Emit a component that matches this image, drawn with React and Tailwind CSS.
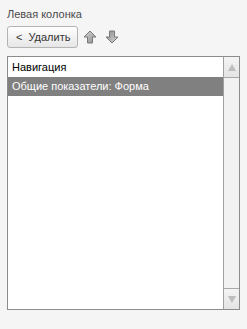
import React from "react";

const ArrowIcon = ({ down }) => (
  <svg width="14" height="14" viewBox="0 0 14 14" className={down ? "rotate-180" : ""}>
    <defs>
      <linearGradient id={down ? "gd" : "gu"} x1="0" y1="0" x2="1" y2="1">
        <stop offset="0" stopColor="#d8d8d8" />
        <stop offset="1" stopColor="#8a8a8a" />
      </linearGradient>
    </defs>
    <path
      d="M7 1 L13 7 L9.5 7 L9.5 13 L4.5 13 L4.5 7 L1 7 Z"
      fill={`url(#${down ? "gd" : "gu"})`}
      stroke="#7a7a7a"
      strokeWidth="1"
      strokeLinejoin="round"
    />
  </svg>
);

const App = () => {
  return (
    <div
      className="w-[247px] h-[329px] bg-[#f5f5f5] text-[11px] text-[#333] overflow-hidden"
      style={{ fontFamily: '"Liberation Sans", Arial, sans-serif' }}
    >
      <div className="pl-[7px] pr-[7px] pt-[6px]">
        <div className="h-[16px] leading-[16px] text-[#4a4a4a]">Левая колонка</div>

        <div className="flex items-center mt-[4px] h-[22px]">
          <button className="h-[22px] w-[71px] flex items-center rounded-[3px] border border-[#b4b4b4] bg-gradient-to-b from-white to-[#e6e6e6] pl-[8px] text-[#333]">
            <span className="mr-[6px] text-[11px]">&lt;</span>
            <span>Удалить</span>
          </button>
          <div className="ml-[5px] flex items-center gap-[8px]">
            <ArrowIcon />
            <ArrowIcon down />
          </div>
        </div>

        <div className="mt-[8px] h-[254px] w-[233px] border border-[#8c8c8c] bg-white flex">
          <div className="flex-1 flex flex-col">
            <div className="h-[20px] leading-[20px] pl-[4px] text-black">Навигация</div>
            <div className="h-[19px] leading-[19px] pl-[4px] bg-[#808080] text-white">
              Общие показатели: Форма
            </div>
          </div>
          <div className="w-[16px] flex flex-col border-l border-[#a0a0a0] bg-[#f2f2f2]">
            <div className="h-[21px] border-b border-[#a8a8a8] bg-gradient-to-b from-[#f4f4f4] to-[#e4e4e4] flex items-center justify-center">
              <div className="w-0 h-0 border-l-[4px] border-r-[4px] border-b-[7px] border-l-transparent border-r-transparent border-b-[#bdbdbd]" />
            </div>
            <div className="flex-1" />
            <div className="h-[21px] border-t border-[#a8a8a8] bg-gradient-to-b from-[#f4f4f4] to-[#e4e4e4] flex items-center justify-center">
              <div className="w-0 h-0 border-l-[4px] border-r-[4px] border-t-[7px] border-l-transparent border-r-transparent border-t-[#bdbdbd]" />
            </div>
          </div>
        </div>
      </div>
    </div>
  );
};

export default App;
